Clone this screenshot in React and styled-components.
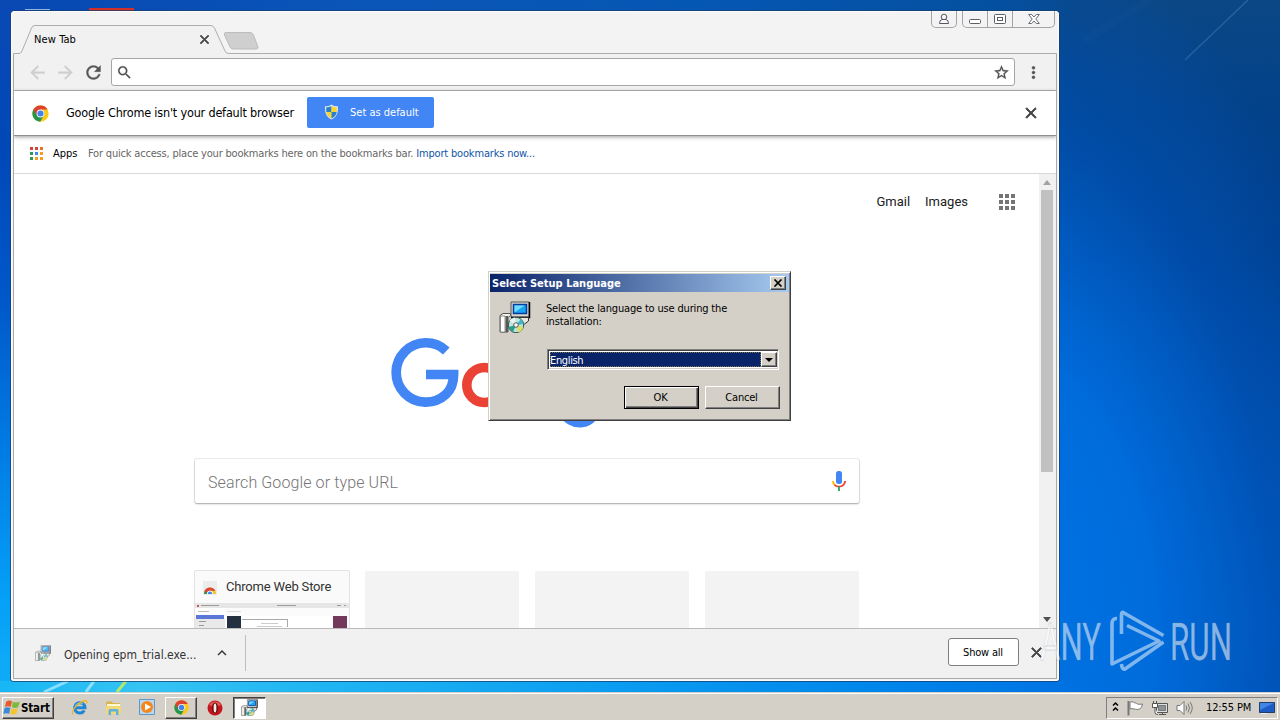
import React from 'react';
import styled, { createGlobalStyle, css } from 'styled-components';
import {
  MdArrowBack,
  MdArrowForward,
  MdRefresh,
  MdSearch,
  MdStarBorder,
  MdMoreVert,
  MdClose,
  MdKeyboardArrowUp,
} from 'react-icons/md';

const GlobalStyle = createGlobalStyle`
  * { box-sizing: border-box; }
  body {
    margin: 0;
    overflow: hidden;
    font-family: "DejaVu Sans Condensed", "DejaVu Sans", Tahoma, sans-serif;
    font-size: 11px;
    color: #000;
  }
  svg { display: block; flex: none; }
`;

// ---------- desktop ----------
const Desktop = styled.div`
  position: relative;
  display: flex;
  flex-direction: column;
  width: 1280px;
  height: 720px;
  overflow: hidden;
`;
const Wallpaper = styled.div`
  position: relative;
  flex: 1;
  background:
    linear-gradient(90deg, #17b6f4 0, #35c4f3 140px, #1fb4f2 330px, #0a9cf0 620px, #0084ea 900px, rgba(0, 110, 220, 0) 1080px) 0 100% / 1280px 11px no-repeat,
    linear-gradient(180deg, #0a49b4 0, #0048b8 150px, #0058ca 300px, #007ce4 450px, #05a0f8 600px, #12adf6 692px) 0 0 / 30px 692px no-repeat,
    linear-gradient(90deg, #0747b2 0, #0a55b8 350px, #0557b4 700px, #04509f 1000px, rgba(8, 72, 135, 0) 1080px) 0 0 / 1100px 12px no-repeat,
    radial-gradient(ellipse 400px 720px at 990px 640px, #0074e4 0, #006cdc 40%, rgba(0, 86, 190, 0.55) 72%, rgba(0, 70, 150, 0) 100%),
    linear-gradient(180deg, #0b4785 0, #03428a 110px, #003f8e 260px, #0049a2 430px, #0053b4 620px, #0050b0 692px);
`;
const Streaks = styled.svg`
  position: absolute;
  inset: 0;
`;
const Watermark = styled.svg`
  position: absolute;
  left: 1030px;
  top: 600px;
  z-index: 5;
`;

// ---------- browser window ----------
const BrowserWindow = styled.div`
  position: absolute;
  left: 11px;
  top: 11px;
  width: 1048px;
  height: 670px;
  display: flex;
  flex-direction: column;
  padding: 0 2px 2px;
  background: #f3f3f3;
  border-radius: 4px 4px 3px 3px;
  box-shadow: 0 0 0 1px rgba(24, 62, 108, 0.75), inset 0 0 0 1px #fcfcfc;
`;
const TabStrip = styled.div`
  position: relative;
  display: flex;
  height: 43px;
  margin: 0 -2px;
  flex: none;
`;
const TabShape = styled.svg`
  position: absolute;
  left: 0;
  top: 0;
`;
// the material icons carry an empty 24x24 bounding path, leave that one unstroked
const CloseIcon = styled(MdClose)`
  color: #484848;
  path:not([fill='none']) { stroke-width: 1.2px; }
`;
const Tab = styled.div`
  position: relative;
  display: flex;
  align-items: center;
  justify-content: space-between;
  width: 178px;
  height: 26px;
  margin: 15px 0 0 23px;
  letter-spacing: 0.1px;
`;
const CaptionButtons = styled.div`
  position: relative;
  display: flex;
  gap: 5px;
  height: 17px;
  margin: 0 4px 0 auto;
`;
const CaptionGroup = styled.div`
  display: flex;
  border: 1px solid #a3a3a3;
  border-top: 0;
  border-radius: 0 0 5px 5px;
`;
const CaptionButton = styled.div`
  display: flex;
  align-items: center;
  justify-content: center;
  width: ${(p) => p.$w}px;
  & + & { border-left: 1px solid #a3a3a3; }
`;
const Client = styled.div`
  flex: 1;
  min-height: 0;
  display: flex;
  flex-direction: column;
  overflow: hidden;
  border: 1px solid #aba9a9;
  border-top: 0;
  background: #fff;
`;
const Toolbar = styled.div`
  display: flex;
  align-items: center;
  height: 37px;
  flex: none;
  padding-left: 9px;
  background: #f1f1f1;
  border-bottom: 1px solid #b4b4b4;
`;
const NavButton = styled.div`
  display: flex;
  justify-content: center;
  width: 28px;
  color: ${(p) => (p.$disabled ? '#cfcfcf' : '#555')};
  path:not([fill='none']) { stroke-width: 0.4px; }
`;
const Omnibox = styled.div`
  display: flex;
  align-items: center;
  justify-content: space-between;
  width: 904px;
  height: 28px;
  margin: 0 4px;
  padding: 0 4px;
  color: #505050;
  background: #fff;
  border: 1px solid #a6a6a6;
  border-radius: 3px;
  path:not([fill='none']) { stroke-width: 0.4px; }
`;
const InfoBar = styled.div`
  position: relative;
  display: flex;
  align-items: center;
  height: 45px;
  flex: none;
  padding: 0 16px 0 18px;
  background: #fff;
  border-bottom: 1px solid #8f8f8f;
  box-shadow: 0 1px 4px rgba(0, 0, 0, 0.4);
`;
const InfoText = styled.span`
  width: 241px;
  margin-left: 17px;
  padding-bottom: 2px;
  font-size: 12.5px;
  letter-spacing: -0.18px;
  white-space: nowrap;
`;
const DefaultButton = styled.div`
  display: flex;
  align-items: center;
  gap: 11px;
  width: 127px;
  height: 31px;
  margin-bottom: 1px;
  padding: 0 0 1px 17px;
  color: #fff;
  background: #4285f4;
  border-radius: 2px;
  white-space: nowrap;
`;
const InfoClose = styled.div`
  margin-left: auto;
`;
const BookmarkBar = styled.div`
  display: flex;
  align-items: center;
  height: 38px;
  flex: none;
  padding: 0 0 3px 16px;
  border-bottom: 1px solid #d9d9d9;
  white-space: nowrap;
`;
const AppsLabel = styled.span`
  width: 35px;
  margin-left: 10px;
`;
const BookmarkHint = styled.span`
  color: #666;
  letter-spacing: -0.19px;
`;
const BookmarkLink = styled.span`
  margin-left: 3px;
  color: #1155a8;
  letter-spacing: -0.18px;
`;
const Viewport = styled.div`
  display: flex;
  flex: 1;
  min-height: 0;
`;

// ---------- new tab page ----------
const NewTabPage = styled.div`
  flex: 1;
  min-width: 0;
  display: flex;
  flex-direction: column;
  overflow: hidden;
  font-family: Roboto, "Liberation Sans", sans-serif;
`;
const TopLinks = styled.div`
  display: flex;
  align-items: center;
  justify-content: flex-end;
  gap: 15px;
  height: 56px;
  flex: none;
  padding-right: 24px;
  font-size: 13px;
  color: #202020;
`;
const TopLink = styled.span`
  padding-bottom: 2px;
`;
const AppLauncher = styled.div`
  margin-left: 16px;
`;
const Logo = styled.svg`
  margin: 100px 0 0 374px;
`;
const SearchBox = styled.div`
  display: flex;
  align-items: center;
  justify-content: space-between;
  width: 664px;
  height: 44px;
  flex: none;
  margin: 29px 0 0 181px;
  padding: 3px 12px 0 13px;
  font-size: 16px;
  font-weight: 300;
  letter-spacing: 0.11px;
  color: #757575;
  background: #fff;
  border-radius: 2px;
  box-shadow: 0 1px 2px rgba(0, 0, 0, 0.3), 0 0 0 1px rgba(0, 0, 0, 0.07);
  svg { margin-bottom: 3px; }
`;
const Tiles = styled.div`
  display: flex;
  flex: none;
  gap: 16px;
  margin: 67px 0 0 180px;
`;
const Tile = styled.div`
  width: 154px;
  height: 128px;
  margin-top: 1px;
  background: #f3f3f3;
  border-radius: 2px;
`;
const SiteTile = styled(Tile)`
  width: 156px;
  margin: 0 -1px 0 0;
  background: #fafafa;
  border: 1px solid #e3e3e3;
`;
const TileTitle = styled.div`
  display: flex;
  align-items: center;
  gap: 9px;
  height: 32px;
  padding: 0 0 1px 8px;
  font-size: 13px;
  letter-spacing: -0.18px;
  color: #323232;
  svg { margin-top: 2px; }
`;
const Scrollbar = styled.div`
  display: flex;
  flex-direction: column;
  align-items: center;
  justify-content: space-between;
  width: 17px;
  padding: 6px 1px 6px 0;
  background: #f1f1f1;
`;
const Thumb = styled.div`
  width: 12px;
  height: 282px;
  margin: 5px 0 auto;
  background: #c1c1c1;
`;
const ScrollArrow = styled.div`
  width: 0;
  height: 0;
  border: solid transparent;
  border-width: ${(p) => (p.$up ? '0 4px 5px' : '5px 4px 0')};
  border-${(p) => (p.$up ? 'bottom' : 'top')}-color: ${(p) => (p.$up ? '#a3a3a3' : '#505050')};
`;

// ---------- download shelf ----------
const DownloadShelf = styled.div`
  display: flex;
  align-items: center;
  height: 50px;
  flex: none;
  padding: 0 11px 2px 21px;
  background: #f1f1f1;
  border-top: 1px solid #b9b9b9;
`;
const DownloadItem = styled.div`
  display: flex;
  align-items: center;
  width: 211px;
  height: 36px;
  color: #333;
  border-right: 1px solid #bdbdbd;
`;
const DownloadName = styled.span`
  width: 149px;
  margin: 4px 0 0 13px;
  font-size: 12px;
`;
const ShowAll = styled.div`
  display: flex;
  align-items: center;
  justify-content: center;
  width: 71px;
  height: 28px;
  margin: -1px 9px 0 auto;
  padding-right: 1px;
  background: #fff;
  border: 1px solid #7d7d7d;
  border-radius: 3px;
  letter-spacing: -0.2px;
`;

// ---------- setup dialog ----------
const raised = css`
  border: 1px solid;
  border-color: #fff #404040 #404040 #fff;
  box-shadow: inset -1px -1px #808080;
`;
const Dialog = styled.div`
  position: absolute;
  left: 488px;
  top: 271px;
  z-index: 3;
  width: 303px;
  height: 150px;
  display: flex;
  flex-direction: column;
  padding: 2px;
  background: #d4d0c8;
  border: 1px solid;
  border-color: #d4d0c8 #404040 #404040 #d4d0c8;
  box-shadow: inset 1px 1px #fff, inset -1px -1px #808080;
`;
const TitleBar = styled.div`
  display: flex;
  align-items: center;
  justify-content: space-between;
  height: 18px;
  padding: 0 3px 0 2px;
  margin: 0 -1px 0;
  font-weight: bold;
  color: #fff;
  background: linear-gradient(90deg, #0a246a, #a6caf0);
`;
const DialogClose = styled.div`
  ${raised}
  display: flex;
  align-items: center;
  justify-content: center;
  width: 16px;
  height: 14px;
  background: #d4d0c8;
`;
const DialogBody = styled.div`
  display: flex;
  gap: 15px;
  padding: 9px 8px 0;
`;
const DialogMain = styled.div`
  flex: 1;
`;
const Prompt = styled.div`
  height: 48px;
  padding-top: 1px;
  line-height: 13px;
  letter-spacing: -0.17px;
  white-space: nowrap;
`;
const Combo = styled.div`
  display: flex;
  width: 232px;
  height: 21px;
  margin-left: 1px;
  padding: 2px 1px 2px 2px;
  background: #fff;
  border: 1px solid;
  border-color: #808080 #fff #fff #808080;
  box-shadow: inset 1px 1px #404040, inset -1px -1px #d4d0c8;
`;
const ComboValue = styled.div`
  flex: 1;
  display: flex;
  align-items: center;
  padding-top: 1px;
  color: #fff;
  background: #0a246a;
  border: 0 solid #fff;
  outline: 1px dotted #7c7450;
  outline-offset: -1px;
  letter-spacing: -0.35px;
`;
const ComboArrow = styled.div`
  ${raised}
  display: flex;
  align-items: center;
  justify-content: center;
  width: 16px;
  background: #d4d0c8;
`;
const DialogActions = styled.div`
  display: flex;
  justify-content: flex-end;
  gap: 6px;
  margin-top: 16px;
`;
const DialogButton = styled.div`
  ${raised}
  display: flex;
  align-items: center;
  justify-content: center;
  width: 75px;
  height: 23px;
  padding-right: 2px;
  letter-spacing: -0.2px;
  ${(p) =>
    p.$primary &&
    css`
      border-color: #000;
      box-shadow: inset 1px 1px #fff, inset -1px -1px #404040, inset -2px -2px #808080;
    `}
`;

// ---------- taskbar ----------
const Taskbar = styled.div`
  display: flex;
  align-items: center;
  height: 28px;
  flex: none;
  padding: 2px 2px 0;
  background: #d4d0c8;
  border-top: 1px solid #d4d0c8;
  box-shadow: inset 0 1px #fff;
`;
const StartButton = styled.div`
  ${raised}
  display: flex;
  align-items: center;
  width: 52px;
  height: 22px;
  margin-right: 8px;
  font-size: 11.5px;
  font-weight: bold;
  letter-spacing: -0.15px;
`;
const TaskItem = styled.div`
  display: flex;
  align-items: center;
  justify-content: center;
  width: ${(p) => p.$w || 34}px;
  height: 22px;
  ${(p) =>
    p.$open &&
    css`
      ${raised}
      margin-left: 1px;
    `}
  ${(p) =>
    p.$active &&
    css`
      margin-left: 1px;
      background: #fff;
      border: 1px solid;
      border-color: #404040 #fff #fff #404040;
      box-shadow: inset 1px 1px #808080;
    `}
`;
const Tray = styled.div`
  display: flex;
  align-items: center;
  width: 172px;
  height: 22px;
  margin-left: auto;
  padding: 0 1px 0 5px;
  border: 1px solid;
  border-color: #808080 #fff #fff #808080;
`;
const TrayIcons = styled.div`
  display: flex;
  align-items: center;
  gap: 8px;
`;
const Clock = styled.span`
  width: 53px;
  margin-left: 13px;
  letter-spacing: -0.12px;
  white-space: nowrap;
`;

// ---------- icons ----------
const ChromeIcon = ({ size = 16 }) => (
  <svg width={size} height={size} viewBox="0 0 48 48">
    <circle cx="24" cy="24" r="23" fill="#fbc916" />
    <path d="M24 24 4.1 12.5A23 23 0 0 0 23 47l11-18z" fill="#22964a" />
    <path d="M24 24 14 30 4.1 12.5A23 23 0 0 1 44 13H24z" fill="#dd4130" />
    <circle cx="24" cy="24" r="11" fill="#f4f6f8" />
    <circle cx="24" cy="24" r="8.6" fill="#4183ec" />
  </svg>
);

const ShieldIcon = () => (
  <svg width="15" height="16" viewBox="0 0 15 16">
    <path d="M7.5.5C9.5 2 12 2.3 14 2.3c.3 6-1 10.700-6.500 13.200C2 13 .7 8.300 1 2.300 3 2.300 5.500 2 7.500.5z" fill="#d9e6ee" />
    <path d="M7.500 2C5.700 3 4 3.400 2.200 3.500L2.300 8h5.200z" fill="#2c7fc4" />
    <path d="M7.500 2c1.800 1 3.500 1.400 5.300 1.500L12.700 8H7.500z" fill="#f8d52a" />
    <path d="M2.300 8c.4 3 2 5 5.200 6.500V8z" fill="#f8d52a" />
    <path d="M12.700 8c-.4 3-2 5-5.200 6.500V8z" fill="#2c7fc4" />
  </svg>
);

const APP_COLORS = ['#d0453a', '#d0453a', '#e8702a', '#2f9a56', '#4285f4', '#f0a020', '#2f9a56', '#f0a020', '#f0a020'];

const DotGrid = ({ size, dot, colors }) => {
  const step = (size - dot) / 2;
  return (
    <svg width={size} height={size} shapeRendering="crispEdges">
      {colors.map((c, i) => (
        <rect key={i} x={(i % 3) * step} y={Math.floor(i / 3) * step} width={dot} height={dot} fill={c} />
      ))}
    </svg>
  );
};

// monitor + box + cd, the usual installer icon
const SetupIcon = ({ size = 32, faded }) => (
  <svg width={size} height={size} viewBox="0 0 32 32" opacity={faded ? 0.75 : 1}>
    <path d="M12 1h18v15H12z" fill="#d8d8d0" stroke="#555" />
    <path d="M30.500 1v15.500H12" fill="none" stroke="#000" strokeWidth="1.500" />
    <path d="M14.500 3.500h13v9h-13z" fill="#16a4f4" stroke="#063a9c" strokeWidth="1.500" />
    <path d="M15.500 11.500v-7h10z" fill="#6fdcff" />
    <path d="M18 16.500h11.500v3.500l-4 3-8-3z" fill="#e8e8e0" stroke="#333" />
    <path d="M1 14.500 4 12.500h7.500v2L9 16.500V31H1z" fill="#f4f4ec" stroke="#555" />
    <path d="M6 15v16H1.500V15z" fill="#fff" stroke="#777" strokeWidth=".8" />
    <path d="M6.500 15h2.500v16H6.500z" fill="#5a5a54" />
    <circle cx="17" cy="24" r="7.700" fill="#bfe4dc" stroke="#32504c" />
    <path d="m17 24-6.500-4.500A8 8 0 0 1 16 16.400z" fill="#e8f4f4" />
    <path d="m17 24 7.400 2.500a8 8 0 0 1-5 5z" fill="#d8e060" />
    <path d="m17 24-3 7.100a8 8 0 0 1-4.500-5z" fill="#27a08c" />
    <path d="m17 24 5-6a8 8 0 0 1 2.600 5z" fill="#3cb6c8" />
    <circle cx="17" cy="24" r="2.300" fill="#fff" stroke="#555" />
  </svg>
);

const GoogleLogo = () => (
  <Logo width="276" height="100" viewBox="388 330 276 100" fill="none">
    <path d="M446.300 350.900A29.700 29.700 0 1 0 446 394.300Q453.600 387 453.600 374.500H426" stroke="#4285f4" strokeWidth="9.700" />
    <circle cx="484.300" cy="385" r="17.500" stroke="#ea4335" strokeWidth="9.600" />
    <circle cx="532" cy="385" r="17.500" stroke="#fbbc05" strokeWidth="9.600" />
    <circle cx="580" cy="385" r="17.500" stroke="#4285f4" strokeWidth="9.600" />
    <path d="M597 366V402C597 428 569 428 562 410" stroke="#4285f4" strokeWidth="9.600" />
    <path d="M613 340V406" stroke="#34a853" strokeWidth="9.600" />
    <path d="M625 392 656 379A17.500 17.500 0 1 0 656 396" stroke="#ea4335" strokeWidth="9.600" />
  </Logo>
);

const MicIcon = () => (
  <svg width="16" height="22" viewBox="0 0 16 22" fill="none">
    <rect x="5" y="1" width="6" height="13" rx="2.500" fill="#4285f4" />
    <path d="M1.900 11c.1 1.700.8 3 1.900 4" stroke="#fbbc05" strokeWidth="1.900" />
    <path d="M3.500 14.800c2.400 2.400 6.600 2.400 9 0 1.100-1.100 1.600-2.300 1.700-3.800" stroke="#ea4335" strokeWidth="1.900" />
    <path d="M8 16.500V21" stroke="#34a853" strokeWidth="1.900" />
  </svg>
);

const WebStoreIcon = () => (
  <svg width="14" height="14" viewBox="0 0 14 14">
    <path d="M0 0h14v14H0z" fill="#ececec" />
    <path d="M1 13a6 6.500 0 0 1 12 0z" fill="#f3c61c" />
    <path d="M1 13a6 6.500 0 0 1 3-5.500L6 13z" fill="#2f9a56" />
    <path d="M1.500 10A6 6 0 0 1 12.500 10L7 9.500 4 12z" fill="#dc4437" />
    <path d="M4 13a3 3.200 0 0 1 6 0z" fill="#fff" />
    <path d="M4.800 13a2.200 2.400 0 0 1 4.400 0z" fill="#4285f4" />
  </svg>
);

const StorePreview = () => (
  <svg width="154" height="94" viewBox="0 0 154 94" shapeRendering="crispEdges">
    <path d="M0 0h154v94H0z" fill="#fbfbfb" />
    <path d="M0 0h154v5H0z" fill="#e6e6e6" />
    <path d="M2 2h2v2H2z" fill="#c25a5a" />
    <path d="M6 2.500h18M82 2.500h19M142 2.500h4M149 2.500h2" stroke="#9c9c9c" />
    <path d="M0 5h30v6H0z" fill="#fff" />
    <path d="M3 8h11" stroke="#bbb" />
    <path d="M1 12h28v4H1z" fill="#5b78d8" />
    <path d="M0 16h30v78H0z" fill="#e9e9e9" />
    <path d="M4 18h7M4 22h5" stroke="#999" />
    <path d="M32 8h14" stroke="#ddd" />
    <path d="M32 13h14v81H32z" fill="#22303f" />
    <path d="M47 13h90v81H47z" fill="#fff" />
    <path d="M47 16.500h46M92.500 16v8" stroke="#a9a9a9" fill="none" />
    <path d="M66 20h17M62 23h25" stroke="#ccc" />
    <path d="M138 13h14v81h-14z" fill="#74395a" />
  </svg>
);

const WindowsFlag = () => (
  <svg width="18" height="17" viewBox="0 0 17 16">
    <path d="M3 2.500c2-1.500 3.500-1.500 5.500-.5L7.300 7.500c-2-.9-3.500-.8-5.500.1z" fill="#e8592b" />
    <path d="M9.300 2.500c2 1 3.700.9 6.500-.1l-1.500 5.300c-2 1-4 1-6 .1z" fill="#7db93c" />
    <path d="M1.500 8.500c2-1 3.600-.9 5.500 0l-1.200 5.500c-1.900-.9-3.500-.9-5.500 0z" fill="#3a8ad8" />
    <path d="M8 8.800c2 1 3.700.9 6-.1l-1.300 5.300c-2 1-4 .9-6 0z" fill="#f6c32c" />
  </svg>
);

const IeIcon = () => (
  <svg width="17" height="17" viewBox="0 0 17 17" fill="none">
    <path d="M13.300 11.500A5.200 5.200 0 1 1 14 8.800H5" stroke="#1f86d6" strokeWidth="3" />
    <path d="M4 7.500A5 5 0 0 1 12 5" stroke="#6cc6f4" strokeWidth="1" />
    <path d="M2 15.500C-1 13 7 3 14.500 1.500c2 0 1.500 2 .5 3.500" stroke="#eeb626" strokeWidth="1.300" />
  </svg>
);

const FolderIcon = () => (
  <svg width="17" height="16" viewBox="0 0 17 16">
    <path d="M1 3 2 1.500h5L8 3h7v11H1z" fill="#dcb44c" />
    <path d="M2 4h13v3H2z" fill="#fff8d4" />
    <path d="M1 6h15v8H1z" fill="#f3d878" />
    <path d="M3.500 15V10.500Q3.500 9 5 9h7q1.500 0 1.500 1.500V15h-2.500v-3.500H6V15z" fill="#62b0dc" />
  </svg>
);

const MediaIcon = () => (
  <svg width="17" height="17" viewBox="0 0 17 17">
    <path d="M.5.500h15v15H.5z" fill="#b8d8f0" stroke="#5d98c8" />
    <circle cx="8" cy="8" r="6" fill="#f4861c" />
    <path d="m6 4.500 6 3.500-6 3.500z" fill="#fff" />
  </svg>
);

const OperaIcon = () => (
  <svg width="16" height="16" viewBox="0 0 16 16">
    <circle cx="8" cy="8" r="7.500" fill="#c4161c" />
    <path d="M2 5a7 7 0 0 1 12 0Q8 8 2 5z" fill="#e05a50" />
    <ellipse cx="8" cy="8" rx="3" ry="5.500" fill="#70090d" />
    <ellipse cx="8" cy="8" rx="1.400" ry="4.600" fill="#f2eeee" />
  </svg>
);

const TrayGlyphs = () => (
  <TrayIcons>
    <svg width="7" height="14" viewBox="0 0 7 14" fill="none" stroke="#000" strokeWidth="1.500">
      <path d="m1 4.500 2.500-2.500L6 4.500M1 9.500 3.500 7 6 9.500" />
    </svg>
    <svg width="17" height="16" viewBox="0 0 17 16">
      <path d="M1.500 1v14.500" stroke="#777" strokeWidth="2" />
      <path d="M3 2c3-1 4 1 6 1 0 0 1 2 6.500 1-1 3-1 5-5 5.500C8 9.500 6 8 3 9z" fill="#fff" stroke="#777" />
    </svg>
    <svg width="16" height="16" viewBox="0 0 16 16">
      <path d="M4.500 3.500h11v9h-11z" fill="#dcdedf" stroke="#555" />
      <path d="M6.500 5.500h7v5h-7z" fill="#8d9296" stroke="#777" />
      <path d="M7 14.500h7M10.500 13v1.500" stroke="#555" />
      <path d="M.5 3.500h5v4h-5zM1.500 1v3M4.500 1v3M3 7.500v5q0 2 3 2" fill="#fff" stroke="#555" />
    </svg>
    <svg width="17" height="16" viewBox="0 0 17 16" fill="none">
      <path d="M1 5.500h3L8 1.500v13L4 10.500H1z" fill="#fff" stroke="#777" />
      <path d="M10 5.500q1.500 2.500 0 5M12 3.500q3 4.500 0 9M14 2q4.500 6 0 12" stroke="#777" />
    </svg>
  </TrayIcons>
);

const DesktopIcon = () => (
  <svg width="16" height="14" viewBox="0 0 16 14">
    <path d="M.5 1.500h15v10H.5z" fill="#1d5cc4" stroke="#243c66" />
    <path d="M1 2h14L1 9z" fill="#3f86e6" />
    <path d="M2 12.500h6" stroke="#e8f0f8" />
  </svg>
);

const BrowserTabs = () => (
  <TabStrip>
    <TabShape width="1048" height="43" viewBox="11 11 1048 43" fill="none">
      <path d="M13.500 54V53.500H19Q21 53.500 22 51L31.500 28Q32.500 25.500 35 25.500H211Q213 25.500 214.500 28L225 51Q226 53.500 229 53.500H1056.500V54" fill="#f1f1f1" stroke="#adadad" />
      <path d="M226 32.500H250Q252.500 32.500 253.500 35L258 47Q258.500 49 256 49H233Q231 49 230 47L224.500 35Q223.500 32.500 226 32.500z" fill="#cfcfcf" stroke="#bcbcbc" />
    </TabShape>
    <Tab>
      New Tab
      <CloseIcon size={15} />
    </Tab>
    <CaptionButtons>
      <CaptionGroup>
        <CaptionButton $w={24}>
          <svg width="12" height="12" viewBox="0 0 12 12" fill="none" stroke="#555a62">
            <circle cx="6" cy="4" r="2.800" />
            <path d="M1.500 10.500q0-3.500 2.500-4h4q2.500.5 2.500 4z" fill="#fafafa" />
          </svg>
        </CaptionButton>
      </CaptionGroup>
      <CaptionGroup>
        <CaptionButton $w={24}>
          <svg width="13" height="12" viewBox="0 0 13 12" fill="#fff" stroke="#5a5f66">
            <rect x=".5" y="6.500" width="11" height="4" rx="1" />
          </svg>
        </CaptionButton>
        <CaptionButton $w={25}>
          <svg width="12" height="12" viewBox="0 0 12 12" fill="#fff" stroke="#5a5f66">
            <rect x=".5" y="1.500" width="11" height="9" rx="1" />
            <rect x="3.500" y="4.500" width="5" height="3" />
          </svg>
        </CaptionButton>
        <CaptionButton $w={42}>
          <svg width="12" height="12" viewBox="0 0 12 12" fill="#fff" stroke="#5a5f66" strokeWidth=".9">
            <path d="M.7 1.500h3L6 4l2.300-2.500h3L7.800 6l3.500 4.500h-3L6 8l-2.300 2.500h-3L4.200 6z" />
          </svg>
        </CaptionButton>
      </CaptionGroup>
    </CaptionButtons>
  </TabStrip>
);

const SetupDialog = () => (
  <Dialog>
    <TitleBar>
      Select Setup Language
      <DialogClose>
        <svg width="10" height="8" viewBox="0 0 10 8" stroke="#000" strokeWidth="1.700">
          <path d="m1.500.5 7 7M8.500.5l-7 7" />
        </svg>
      </DialogClose>
    </TitleBar>
    <DialogBody>
      <SetupIcon />
      <DialogMain>
        <Prompt>
          Select the language to use during the
          <br />
          installation:
        </Prompt>
        <Combo>
          <ComboValue>English</ComboValue>
          <ComboArrow>
            <svg width="8" height="4">
              <path d="M0 0h8L4 4z" />
            </svg>
          </ComboArrow>
        </Combo>
        <DialogActions>
          <DialogButton $primary>OK</DialogButton>
          <DialogButton>Cancel</DialogButton>
        </DialogActions>
      </DialogMain>
    </DialogBody>
  </Dialog>
);

const App = () => (
  <>
    <GlobalStyle />
    <Desktop>
      <Wallpaper>
        <Streaks width="1280" height="692" fill="none">
          <path d="M1248 0 1185 60" stroke="#7fb0dc" strokeOpacity=".25" strokeWidth="1.500" />
          <path d="M1150 0 1085 40" stroke="#3d7fc0" strokeOpacity=".06" strokeWidth="8" />
          <path d="M44 692 68 681M86 692 94 681" stroke="#b8ecff" strokeOpacity=".7" strokeWidth="3" />
          <path d="M117 692 126 681" stroke="#b4e86a" strokeWidth="3" />
          <path d="M25 9.500H50" stroke="#8fb4e0" />
          <path d="M89 9.500H134" stroke="#d3302a" strokeWidth="3" />
        </Streaks>

        <BrowserWindow>
          <BrowserTabs />
          <Client>
            <Toolbar>
              <NavButton $disabled><MdArrowBack size={21} /></NavButton>
              <NavButton $disabled><MdArrowForward size={21} /></NavButton>
              <NavButton><MdRefresh size={21} /></NavButton>
              <Omnibox>
                <MdSearch size={17} />
                <MdStarBorder size={17} />
              </Omnibox>
              <NavButton><MdMoreVert size={19} /></NavButton>
            </Toolbar>

            <InfoBar>
              <ChromeIcon size={17} />
              <InfoText>Google Chrome isn't your default browser</InfoText>
              <DefaultButton>
                <ShieldIcon />
                Set as default
              </DefaultButton>
              <InfoClose><CloseIcon size={18} /></InfoClose>
            </InfoBar>

            <BookmarkBar>
              <DotGrid size={13} dot={3} colors={APP_COLORS} />
              <AppsLabel>Apps</AppsLabel>
              <BookmarkHint>For quick access, place your bookmarks here on the bookmarks bar.</BookmarkHint>
              <BookmarkLink>Import bookmarks now...</BookmarkLink>
            </BookmarkBar>

            <Viewport>
              <NewTabPage>
                <TopLinks>
                  <TopLink>Gmail</TopLink>
                  <TopLink>Images</TopLink>
                  <AppLauncher>
                    <DotGrid size={16} dot={4} colors={Array(9).fill('#757575')} />
                  </AppLauncher>
                </TopLinks>
                <GoogleLogo />
                <SearchBox>
                  Search Google or type URL
                  <MicIcon />
                </SearchBox>
                <Tiles>
                  <SiteTile>
                    <TileTitle>
                      <WebStoreIcon />
                      Chrome Web Store
                    </TileTitle>
                    <StorePreview />
                  </SiteTile>
                  <Tile />
                  <Tile />
                  <Tile />
                </Tiles>
              </NewTabPage>
              <Scrollbar>
                <ScrollArrow $up />
                <Thumb />
                <ScrollArrow />
              </Scrollbar>
            </Viewport>

            <DownloadShelf>
              <DownloadItem>
                <SetupIcon size={16} faded />
                <DownloadName>Opening epm_trial.exe...</DownloadName>
                <MdKeyboardArrowUp size={18} />
              </DownloadItem>
              <ShowAll>Show all</ShowAll>
              <CloseIcon size={17} />
            </DownloadShelf>
          </Client>
        </BrowserWindow>

        <SetupDialog />

        <Watermark width="240" height="90" viewBox="1030 600 240 90">
          <g fill="#fff" fillOpacity=".55" stroke="#8899aa" strokeOpacity=".28" strokeWidth=".8" fontFamily="Roboto, sans-serif" fontSize="51">
            <text x="1040" y="660" textLength="61" lengthAdjust="spacingAndGlyphs">ANY</text>
            <text x="1170" y="660" textLength="62" lengthAdjust="spacingAndGlyphs">RUN</text>
          </g>
          <g fill="none" stroke="#fff" strokeOpacity=".5" strokeWidth="3.600" strokeLinejoin="round">
            <path d="M1117 618.500Q1112 618 1112 624V664L1159 641 1127 625.500" />
            <path d="M1121.500 634V615Q1121.500 611 1124 613L1163.500 635.500" />
            <path d="M1163.500 642 1125 669Q1122 670 1121.500 664" />
          </g>
        </Watermark>
      </Wallpaper>

      <Taskbar>
        <StartButton>
          <WindowsFlag />
          Start
        </StartButton>
        <TaskItem><IeIcon /></TaskItem>
        <TaskItem><FolderIcon /></TaskItem>
        <TaskItem><MediaIcon /></TaskItem>
        <TaskItem $w={32} $open><ChromeIcon size={15} /></TaskItem>
        <TaskItem $w={35}><OperaIcon /></TaskItem>
        <TaskItem $w={33} $active><SetupIcon size={17} /></TaskItem>
        <Tray>
          <TrayGlyphs />
          <Clock>12:55 PM</Clock>
          <DesktopIcon />
        </Tray>
      </Taskbar>
    </Desktop>
  </>
);

export default App;
